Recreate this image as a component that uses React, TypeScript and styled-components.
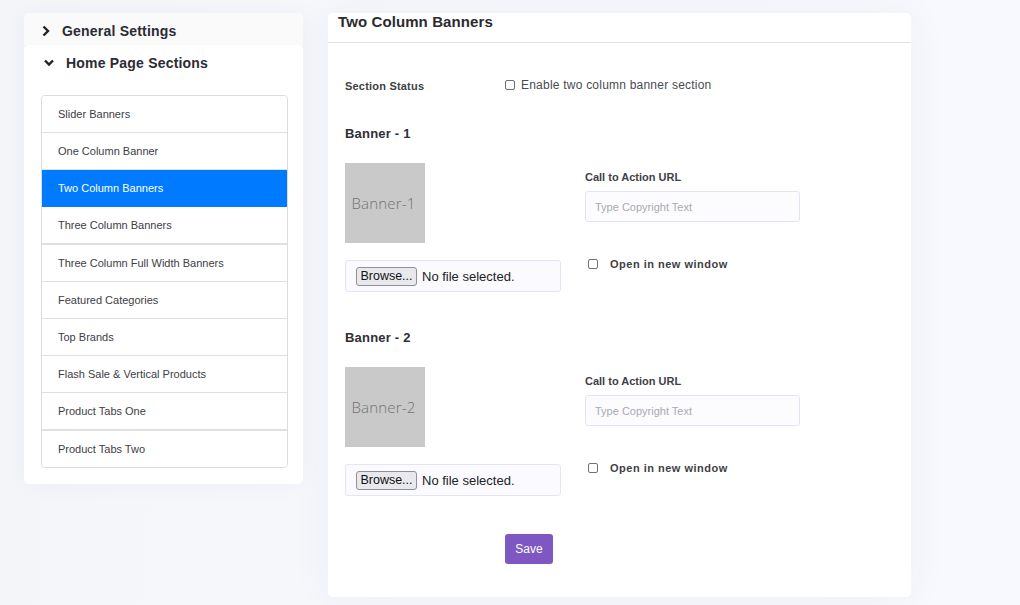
import React from "react";
import styled, { createGlobalStyle } from "styled-components";

const Global = createGlobalStyle`
  * { box-sizing: border-box; }
  html, body { margin: 0; padding: 0; }
  body {
    background: #f7f8fd;
    font-family: "Liberation Sans", Arial, sans-serif;
    color: #333;
  }
`;

const Page = styled.div`
  display: flex;
  align-items: flex-start;
  gap: 25px;
  padding: 13px 0 8px 24px;
  min-height: 605px;
  background: linear-gradient(90deg, #f4f5f9 0%, #f7f8fc 40%, #f8f9fe 100%);
`;

const Sidebar = styled.aside`
  width: 279px;
  display: flex;
  flex-direction: column;
  box-shadow: 0 0 24px rgba(40, 50, 100, 0.04);
  border-radius: 5px;
`;

const AccordionHeader = styled.div<{ $open?: boolean }>`
  display: flex;
  align-items: center;
  gap: 12px;
  height: ${(p) => (p.$open ? "36px" : "32px")};
  padding-top: ${(p) => (p.$open ? "0" : "4px")};
  padding-left: 18px;
  font-size: 14px;
  font-weight: bold;
  letter-spacing: 0.2px;
  color: #2b2b33;
`;

const CollapsedItem = styled.div`
  background: #fafafb;
  border-radius: 5px 5px 0 0;
`;

const OpenItem = styled.div`
  background: #fff;
  border-radius: 5px;
  padding: 0 15px 16px 17px;
  & > ${AccordionHeader} {
    padding-left: 3px;
    margin-bottom: 14px;
  }
`;

const MenuList = styled.ul`
  list-style: none;
  margin: 0;
  padding: 0;
  border: 1px solid #dcdcdf;
  border-radius: 4px;
  overflow: hidden;
`;

const MenuItem = styled.li<{ $active?: boolean; $thick?: boolean }>`
  height: ${(p) => (p.$thick ? "38px" : "37px")};
  display: flex;
  align-items: center;
  padding-left: 16px;
  font-size: 11px;
  color: ${(p) => (p.$active ? "#fff" : "#3d3d45")};
  background: ${(p) => (p.$active ? "#007bff" : "#fff")};
  border-bottom: ${(p) => (p.$thick ? "2px" : "1px")} solid
    ${(p) => (p.$active ? "#007bff" : "#e0e0e3")};
  &:last-child {
    height: 36px;
    border-bottom: none;
  }
`;

const Card = styled.main`
  width: 583px;
  background: #fff;
  border-radius: 5px;
  box-shadow: 0 0 40px rgba(40, 50, 110, 0.05);
`;

const CardHeader = styled.div`
  height: 30px;
  padding: 0 10px;
  border-bottom: 1px solid #e3e3e6;
  font-size: 15px;
  line-height: 17px;
  font-weight: bold;
  letter-spacing: 0.1px;
  color: #2a2a2f;
`;

const CardBody = styled.div`
  display: flex;
  flex-direction: column;
  padding: 34px 17px 33px 17px;
`;

const StatusRow = styled.div`
  display: flex;
  align-items: center;
  height: 15px;
`;

const FieldLabel = styled.span<{ $width?: number }>`
  display: inline-block;
  width: ${(p) => (p.$width ? `${p.$width}px` : "auto")};
  font-size: 11px;
  font-weight: bold;
  color: #3f3f46;
  letter-spacing: 0.2px;
`;

const StatusLabel = styled(FieldLabel)`
  padding-top: 2px;
`;

const CheckLabel = styled.label<{ $bold?: boolean }>`
  display: inline-flex;
  align-items: center;
  gap: ${(p) => (p.$bold ? "12px" : "6px")};
  font-size: ${(p) => (p.$bold ? "11px" : "12px")};
  font-weight: ${(p) => (p.$bold ? "bold" : "normal")};
  letter-spacing: ${(p) => (p.$bold ? "0.5px" : "0.22px")};
  color: ${(p) => (p.$bold ? "#3f3f46" : "#4a4a52")};
`;

const Check = styled.input.attrs({ type: "checkbox" })`
  appearance: none;
  margin: 0;
  width: 10px;
  height: 10px;
  border: 1px solid #6f6f78;
  border-radius: 2px;
  background: #fff;
`;

const BannerTitle = styled.h3<{ $first?: boolean }>`
  margin: ${(p) => (p.$first ? "34px" : "38px")} 0 22px 0;
  font-size: 13px;
  line-height: 15px;
  font-weight: bold;
  color: #2e2e35;
  letter-spacing: 0.2px;
`;

const BannerGrid = styled.div`
  display: grid;
  grid-template-columns: 216px 215px;
  column-gap: 24px;
`;

const Column = styled.div`
  display: flex;
  flex-direction: column;
  align-items: flex-start;
`;

const Placeholder = styled.div`
  width: 80px;
  height: 80px;
  background: #c9c9c9;
  display: flex;
  align-items: center;
  justify-content: center;
  padding-right: 3px;
  font-family: "Open Sans", "DejaVu Sans", sans-serif;
  font-weight: 300;
  font-size: 15px;
  color: #727272;
  letter-spacing: 0.2px;
`;

const FileBox = styled.div`
  margin-top: 17px;
  width: 216px;
  height: 32px;
  display: flex;
  align-items: center;
  gap: 5px;
  padding-left: 10px;
  border: 1px solid #e4e4f6;
  border-radius: 3px;
  background: #fbfbff;
  font-size: 13px;
  color: #222;
`;

const BrowseButton = styled.span`
  height: 19px;
  width: 61px;
  display: inline-flex;
  align-items: center;
  justify-content: center;
  border: 1px solid #8f8f9d;
  border-radius: 3px;
  background: #e9e9ed;
  font-size: 12.5px;
  color: #111;
`;

const UrlLabel = styled(FieldLabel)`
  margin-top: 8px;
  line-height: 13px;
  letter-spacing: 0;
`;

const TextInput = styled.input`
  margin-top: 7px;
  width: 215px;
  height: 31px;
  padding: 0 9px;
  border: 1px solid #e4e4f6;
  border-radius: 3px;
  background: #fcfcff;
  font-family: "Liberation Sans", Arial, sans-serif;
  font-size: 11px;
  outline: none;
  &::placeholder {
    color: #a9a9b0;
  }
`;

const WindowRow = styled.div`
  margin-top: 33px;
  padding-left: 3px;
`;

const SaveButton = styled.button`
  margin: 38px 0 0 160px;
  width: 48px;
  height: 30px;
  border: none;
  border-radius: 3px;
  background: #7e57c2;
  color: #fff;
  font-family: "Liberation Sans", Arial, sans-serif;
  font-size: 12px;
  align-self: flex-start;
`;

const ChevronRight = () => (
  <svg width="8" height="12" viewBox="0 0 8 12">
    <polyline points="1.5,1.5 6,6 1.5,10.5" fill="none" stroke="#222" strokeWidth="2.4" />
  </svg>
);

const ChevronDown = () => (
  <svg width="10" height="8" viewBox="0 0 10 8">
    <polyline points="1,1.5 5,5.5 9,1.5" fill="none" stroke="#222" strokeWidth="2.4" />
  </svg>
);

const menu = [
  { label: "Slider Banners" },
  { label: "One Column Banner" },
  { label: "Two Column Banners", active: true },
  { label: "Three Column Banners", thick: true },
  { label: "Three Column Full Width Banners" },
  { label: "Featured Categories" },
  { label: "Top Brands" },
  { label: "Flash Sale & Vertical Products" },
  { label: "Product Tabs One", thick: true },
  { label: "Product Tabs Two" },
];

const Banner = ({ n }: { n: number }) => (
  <>
    <BannerTitle $first={n === 1}>Banner - {n}</BannerTitle>
    <BannerGrid>
      <Column>
        <Placeholder>Banner-{n}</Placeholder>
        <FileBox>
          <BrowseButton>Browse...</BrowseButton>
          <span>No file selected.</span>
        </FileBox>
      </Column>
      <Column>
        <UrlLabel>Call to Action URL</UrlLabel>
        <TextInput placeholder="Type Copyright Text" />
        <WindowRow>
          <CheckLabel $bold>
            <Check />
            Open in new window
          </CheckLabel>
        </WindowRow>
      </Column>
    </BannerGrid>
  </>
);

export default function App() {
  return (
    <>
      <Global />
      <Page>
        <Sidebar>
          <CollapsedItem>
            <AccordionHeader>
              <ChevronRight />
              General Settings
            </AccordionHeader>
          </CollapsedItem>
          <OpenItem>
            <AccordionHeader $open>
              <ChevronDown />
              Home Page Sections
            </AccordionHeader>
            <MenuList>
              {menu.map((m) => (
                <MenuItem key={m.label} $active={m.active} $thick={m.thick}>
                  {m.label}
                </MenuItem>
              ))}
            </MenuList>
          </OpenItem>
        </Sidebar>
        <Card>
          <CardHeader>Two Column Banners</CardHeader>
          <CardBody>
            <StatusRow>
              <StatusLabel $width={160}>Section Status</StatusLabel>
              <CheckLabel>
                <Check />
                Enable two column banner section
              </CheckLabel>
            </StatusRow>
            <Banner n={1} />
            <Banner n={2} />
            <SaveButton>Save</SaveButton>
          </CardBody>
        </Card>
      </Page>
    </>
  );
}
